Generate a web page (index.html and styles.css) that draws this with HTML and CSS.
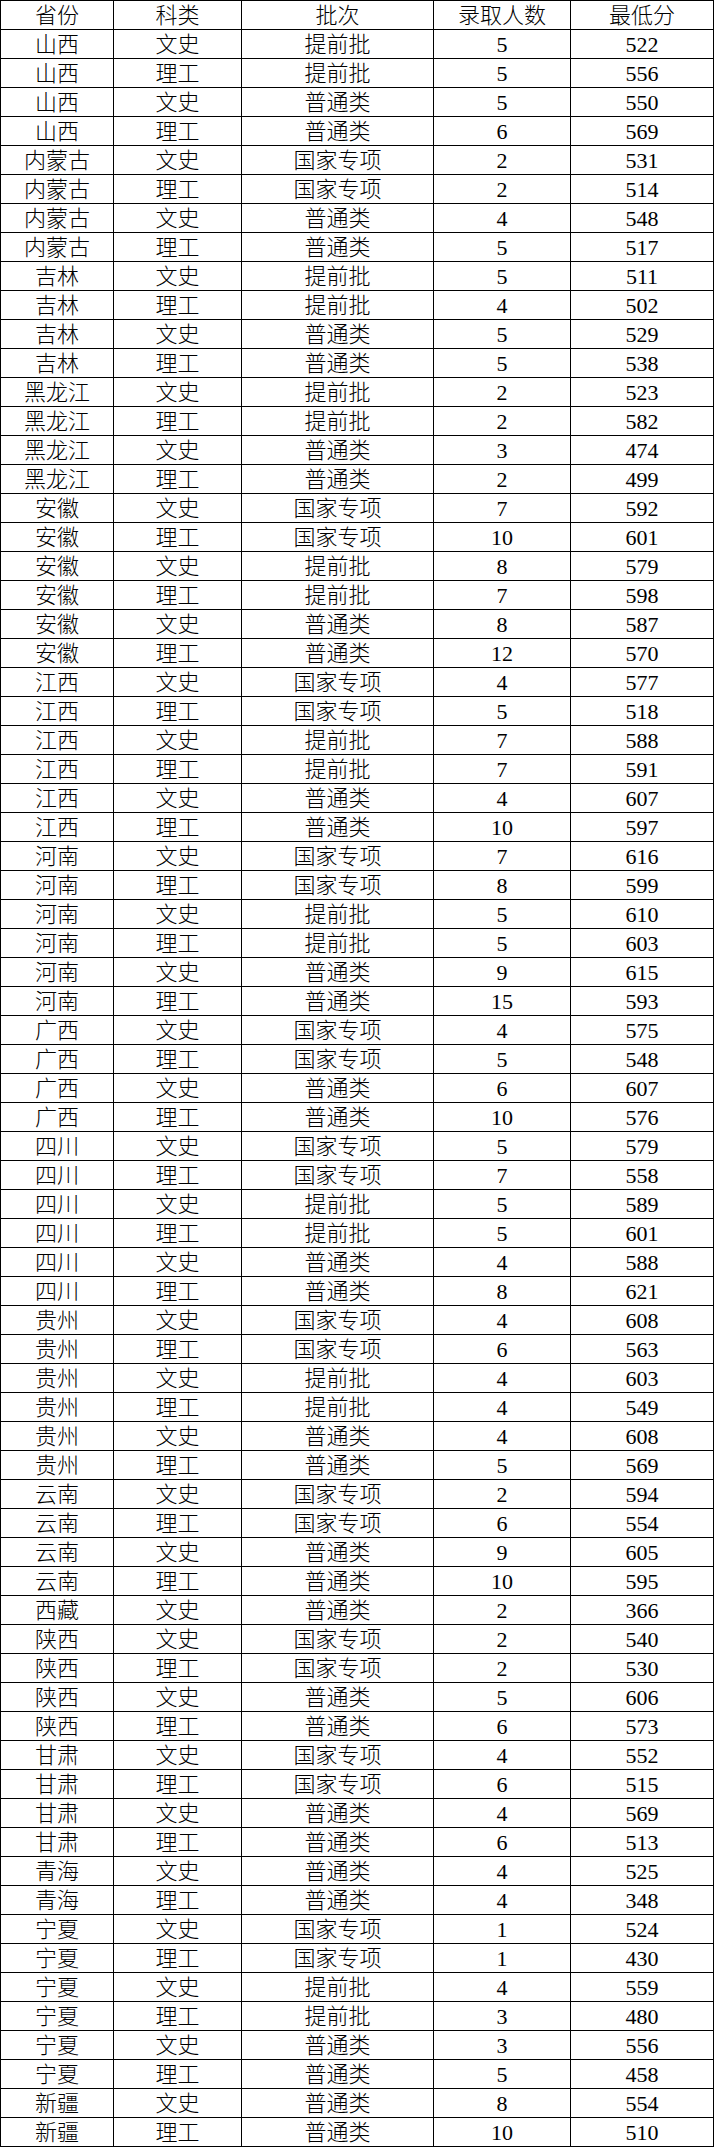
FILE: index.html
```html
<!DOCTYPE html>
<html lang="zh-CN">
<head>
<meta charset="utf-8">
<title>录取分数</title>
<link rel="stylesheet" href="styles.css">
</head>
<body>
<div class="sheet">
<div class="c">省份</div><div class="c">科类</div><div class="c">批次</div><div class="c">录取人数</div><div class="c">最低分</div>
<div class="c">山西</div><div class="c">文史</div><div class="c">提前批</div><div class="c">5</div><div class="c">522</div>
<div class="c">山西</div><div class="c">理工</div><div class="c">提前批</div><div class="c">5</div><div class="c">556</div>
<div class="c">山西</div><div class="c">文史</div><div class="c">普通类</div><div class="c">5</div><div class="c">550</div>
<div class="c">山西</div><div class="c">理工</div><div class="c">普通类</div><div class="c">6</div><div class="c">569</div>
<div class="c">内蒙古</div><div class="c">文史</div><div class="c">国家专项</div><div class="c">2</div><div class="c">531</div>
<div class="c">内蒙古</div><div class="c">理工</div><div class="c">国家专项</div><div class="c">2</div><div class="c">514</div>
<div class="c">内蒙古</div><div class="c">文史</div><div class="c">普通类</div><div class="c">4</div><div class="c">548</div>
<div class="c">内蒙古</div><div class="c">理工</div><div class="c">普通类</div><div class="c">5</div><div class="c">517</div>
<div class="c">吉林</div><div class="c">文史</div><div class="c">提前批</div><div class="c">5</div><div class="c">511</div>
<div class="c">吉林</div><div class="c">理工</div><div class="c">提前批</div><div class="c">4</div><div class="c">502</div>
<div class="c">吉林</div><div class="c">文史</div><div class="c">普通类</div><div class="c">5</div><div class="c">529</div>
<div class="c">吉林</div><div class="c">理工</div><div class="c">普通类</div><div class="c">5</div><div class="c">538</div>
<div class="c">黑龙江</div><div class="c">文史</div><div class="c">提前批</div><div class="c">2</div><div class="c">523</div>
<div class="c">黑龙江</div><div class="c">理工</div><div class="c">提前批</div><div class="c">2</div><div class="c">582</div>
<div class="c">黑龙江</div><div class="c">文史</div><div class="c">普通类</div><div class="c">3</div><div class="c">474</div>
<div class="c">黑龙江</div><div class="c">理工</div><div class="c">普通类</div><div class="c">2</div><div class="c">499</div>
<div class="c">安徽</div><div class="c">文史</div><div class="c">国家专项</div><div class="c">7</div><div class="c">592</div>
<div class="c">安徽</div><div class="c">理工</div><div class="c">国家专项</div><div class="c">10</div><div class="c">601</div>
<div class="c">安徽</div><div class="c">文史</div><div class="c">提前批</div><div class="c">8</div><div class="c">579</div>
<div class="c">安徽</div><div class="c">理工</div><div class="c">提前批</div><div class="c">7</div><div class="c">598</div>
<div class="c">安徽</div><div class="c">文史</div><div class="c">普通类</div><div class="c">8</div><div class="c">587</div>
<div class="c">安徽</div><div class="c">理工</div><div class="c">普通类</div><div class="c">12</div><div class="c">570</div>
<div class="c">江西</div><div class="c">文史</div><div class="c">国家专项</div><div class="c">4</div><div class="c">577</div>
<div class="c">江西</div><div class="c">理工</div><div class="c">国家专项</div><div class="c">5</div><div class="c">518</div>
<div class="c">江西</div><div class="c">文史</div><div class="c">提前批</div><div class="c">7</div><div class="c">588</div>
<div class="c">江西</div><div class="c">理工</div><div class="c">提前批</div><div class="c">7</div><div class="c">591</div>
<div class="c">江西</div><div class="c">文史</div><div class="c">普通类</div><div class="c">4</div><div class="c">607</div>
<div class="c">江西</div><div class="c">理工</div><div class="c">普通类</div><div class="c">10</div><div class="c">597</div>
<div class="c">河南</div><div class="c">文史</div><div class="c">国家专项</div><div class="c">7</div><div class="c">616</div>
<div class="c">河南</div><div class="c">理工</div><div class="c">国家专项</div><div class="c">8</div><div class="c">599</div>
<div class="c">河南</div><div class="c">文史</div><div class="c">提前批</div><div class="c">5</div><div class="c">610</div>
<div class="c">河南</div><div class="c">理工</div><div class="c">提前批</div><div class="c">5</div><div class="c">603</div>
<div class="c">河南</div><div class="c">文史</div><div class="c">普通类</div><div class="c">9</div><div class="c">615</div>
<div class="c">河南</div><div class="c">理工</div><div class="c">普通类</div><div class="c">15</div><div class="c">593</div>
<div class="c">广西</div><div class="c">文史</div><div class="c">国家专项</div><div class="c">4</div><div class="c">575</div>
<div class="c">广西</div><div class="c">理工</div><div class="c">国家专项</div><div class="c">5</div><div class="c">548</div>
<div class="c">广西</div><div class="c">文史</div><div class="c">普通类</div><div class="c">6</div><div class="c">607</div>
<div class="c">广西</div><div class="c">理工</div><div class="c">普通类</div><div class="c">10</div><div class="c">576</div>
<div class="c">四川</div><div class="c">文史</div><div class="c">国家专项</div><div class="c">5</div><div class="c">579</div>
<div class="c">四川</div><div class="c">理工</div><div class="c">国家专项</div><div class="c">7</div><div class="c">558</div>
<div class="c">四川</div><div class="c">文史</div><div class="c">提前批</div><div class="c">5</div><div class="c">589</div>
<div class="c">四川</div><div class="c">理工</div><div class="c">提前批</div><div class="c">5</div><div class="c">601</div>
<div class="c">四川</div><div class="c">文史</div><div class="c">普通类</div><div class="c">4</div><div class="c">588</div>
<div class="c">四川</div><div class="c">理工</div><div class="c">普通类</div><div class="c">8</div><div class="c">621</div>
<div class="c">贵州</div><div class="c">文史</div><div class="c">国家专项</div><div class="c">4</div><div class="c">608</div>
<div class="c">贵州</div><div class="c">理工</div><div class="c">国家专项</div><div class="c">6</div><div class="c">563</div>
<div class="c">贵州</div><div class="c">文史</div><div class="c">提前批</div><div class="c">4</div><div class="c">603</div>
<div class="c">贵州</div><div class="c">理工</div><div class="c">提前批</div><div class="c">4</div><div class="c">549</div>
<div class="c">贵州</div><div class="c">文史</div><div class="c">普通类</div><div class="c">4</div><div class="c">608</div>
<div class="c">贵州</div><div class="c">理工</div><div class="c">普通类</div><div class="c">5</div><div class="c">569</div>
<div class="c">云南</div><div class="c">文史</div><div class="c">国家专项</div><div class="c">2</div><div class="c">594</div>
<div class="c">云南</div><div class="c">理工</div><div class="c">国家专项</div><div class="c">6</div><div class="c">554</div>
<div class="c">云南</div><div class="c">文史</div><div class="c">普通类</div><div class="c">9</div><div class="c">605</div>
<div class="c">云南</div><div class="c">理工</div><div class="c">普通类</div><div class="c">10</div><div class="c">595</div>
<div class="c">西藏</div><div class="c">文史</div><div class="c">普通类</div><div class="c">2</div><div class="c">366</div>
<div class="c">陕西</div><div class="c">文史</div><div class="c">国家专项</div><div class="c">2</div><div class="c">540</div>
<div class="c">陕西</div><div class="c">理工</div><div class="c">国家专项</div><div class="c">2</div><div class="c">530</div>
<div class="c">陕西</div><div class="c">文史</div><div class="c">普通类</div><div class="c">5</div><div class="c">606</div>
<div class="c">陕西</div><div class="c">理工</div><div class="c">普通类</div><div class="c">6</div><div class="c">573</div>
<div class="c">甘肃</div><div class="c">文史</div><div class="c">国家专项</div><div class="c">4</div><div class="c">552</div>
<div class="c">甘肃</div><div class="c">理工</div><div class="c">国家专项</div><div class="c">6</div><div class="c">515</div>
<div class="c">甘肃</div><div class="c">文史</div><div class="c">普通类</div><div class="c">4</div><div class="c">569</div>
<div class="c">甘肃</div><div class="c">理工</div><div class="c">普通类</div><div class="c">6</div><div class="c">513</div>
<div class="c">青海</div><div class="c">文史</div><div class="c">普通类</div><div class="c">4</div><div class="c">525</div>
<div class="c">青海</div><div class="c">理工</div><div class="c">普通类</div><div class="c">4</div><div class="c">348</div>
<div class="c">宁夏</div><div class="c">文史</div><div class="c">国家专项</div><div class="c">1</div><div class="c">524</div>
<div class="c">宁夏</div><div class="c">理工</div><div class="c">国家专项</div><div class="c">1</div><div class="c">430</div>
<div class="c">宁夏</div><div class="c">文史</div><div class="c">提前批</div><div class="c">4</div><div class="c">559</div>
<div class="c">宁夏</div><div class="c">理工</div><div class="c">提前批</div><div class="c">3</div><div class="c">480</div>
<div class="c">宁夏</div><div class="c">文史</div><div class="c">普通类</div><div class="c">3</div><div class="c">556</div>
<div class="c">宁夏</div><div class="c">理工</div><div class="c">普通类</div><div class="c">5</div><div class="c">458</div>
<div class="c">新疆</div><div class="c">文史</div><div class="c">普通类</div><div class="c">8</div><div class="c">554</div>
<div class="c">新疆</div><div class="c">理工</div><div class="c">普通类</div><div class="c">10</div><div class="c">510</div>
</div>
</body>
</html>
```
FILE: styles.css
```css
html, body {
  margin: 0;
  padding: 0;
  background: #fff;
}
.sheet {
  display: grid;
  grid-template-columns: 113px 128px 192px 137px 143px;
  grid-auto-rows: 29px;
  width: max-content;
  border-left: 1px solid #000;
  border-top: 1px solid #000;
  font-family: "Liberation Serif", "Noto Sans CJK SC", serif;
  font-size: 22px;
  font-weight: 300;
  color: #000;
}
.c {
  box-sizing: border-box;
  border-right: 1px solid #000;
  border-bottom: 1px solid #000;
  display: flex;
  align-items: center;
  justify-content: center;
  line-height: 28px;
  padding-top: 2px;
  white-space: nowrap;
}
```
